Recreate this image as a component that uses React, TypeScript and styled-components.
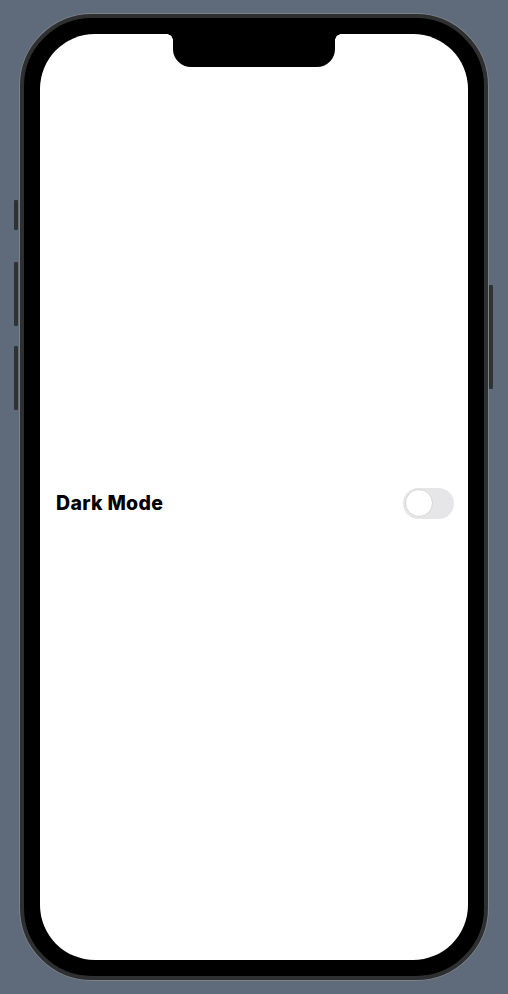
import React, { useState } from "react";
import styled, { createGlobalStyle } from "styled-components";

const Global = createGlobalStyle`
  html, body { margin: 0; padding: 0; }
  body {
    background: #5f6b7a;
    font-family: Inter, "Noto Sans", sans-serif;
  }
`;

const Stage = styled.div`
  width: 508px;
  height: 994px;
  display: flex;
  align-items: center;
  justify-content: center;
`;

const Phone = styled.div`
  position: relative;
  box-sizing: border-box;
  width: 468px;
  height: 966px;
  border-radius: 72px;
  background: #000;
  border: 4px solid #2e2f30;
  box-shadow: 0 0 0 1px #7d8287;
  padding: 16px;
  display: flex;
`;

const SideButton = styled.div<{ $side: "left" | "right"; $top: number; $h: number }>`
  position: absolute;
  ${(p) => (p.$side === "left" ? "left: -10px;" : "right: -9px;")}
  top: ${(p) => p.$top}px;
  width: 4px;
  height: ${(p) => p.$h}px;
  background: #2f3233;
  border-radius: 1px;
`;

const Screen = styled.div`
  position: relative;
  flex: 1;
  background: #fff;
  border-radius: 55px;
  overflow: hidden;
  display: flex;
  flex-direction: column;
  justify-content: center;
  padding-top: 12px;
`;

const Notch = styled.div`
  position: absolute;
  top: 0;
  left: 50%;
  transform: translateX(-50%);
  width: 162px;
  height: 33px;
  background: #000;
  border-radius: 0 0 18px 18px;

  &::before,
  &::after {
    content: "";
    position: absolute;
    top: 0;
    width: 6px;
    height: 6px;
  }
  &::before {
    left: -6px;
    background: radial-gradient(circle at 0 100%, transparent 5.5px, #000 6px);
  }
  &::after {
    right: -6px;
    background: radial-gradient(circle at 100% 100%, transparent 5.5px, #000 6px);
  }
`;

const Row = styled.div`
  display: flex;
  align-items: center;
  justify-content: space-between;
  padding: 0 14px 0 16px;
`;

const Label = styled.span`
  font-family: Inter, "Noto Sans", sans-serif;
  font-weight: 800;
  font-size: 19.5px;
  letter-spacing: 0.3px;
  color: #000;
`;

const Switch = styled.button<{ $on: boolean }>`
  position: relative;
  width: 51px;
  height: 31px;
  border: none;
  padding: 0;
  border-radius: 16px;
  background: ${(p) => (p.$on ? "#34c759" : "#e6e6e8")};
  cursor: pointer;
`;

const Knob = styled.span<{ $on: boolean }>`
  position: absolute;
  top: 1.5px;
  left: ${(p) => (p.$on ? "21.5px" : "1.5px")};
  width: 28px;
  height: 28px;
  box-sizing: border-box;
  border-radius: 50%;
  background: #fff;
  border: 1px solid #d6d6d6;
`;

export default function App() {
  const [on, setOn] = useState(false);
  return (
    <Stage>
      <Global />
      <Phone>
        <SideButton $side="left" $top={182} $h={30} />
        <SideButton $side="left" $top={244} $h={64} />
        <SideButton $side="left" $top={328} $h={64} />
        <SideButton $side="right" $top={267} $h={104} />
        <Screen>
          <Notch />
          <Row>
            <Label>Dark Mode</Label>
            <Switch $on={on} onClick={() => setOn(!on)} aria-label="Dark Mode">
              <Knob $on={on} />
            </Switch>
          </Row>
        </Screen>
      </Phone>
    </Stage>
  );
}
